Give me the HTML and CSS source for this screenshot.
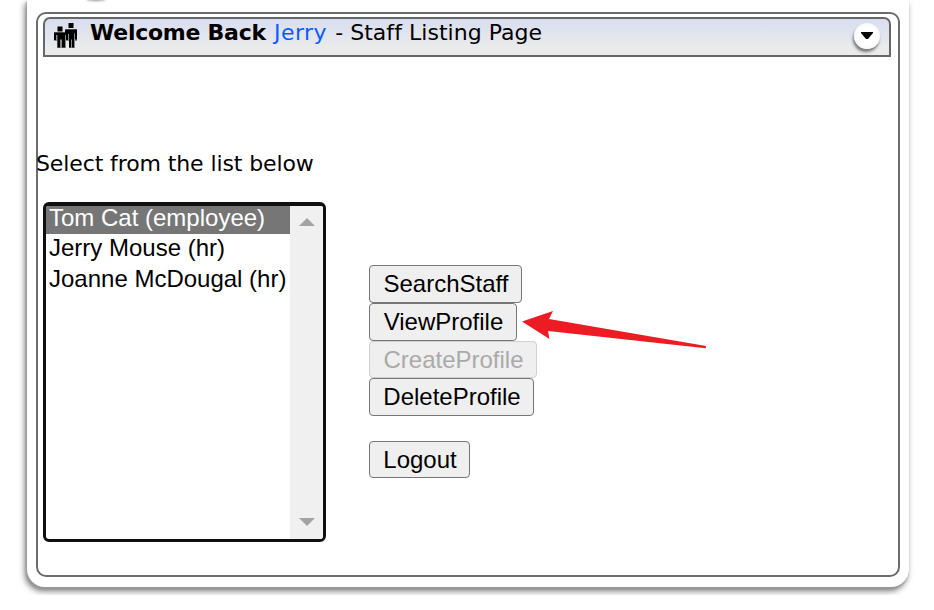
FILE: index.html
```
<!DOCTYPE html>
<html lang="en">
<head>
<meta charset="utf-8">
<title>Staff Listing Page</title>
<link rel="stylesheet" href="styles.css">
</head>
<body>
<div class="page">
  <div class="smudge"></div>
  <main class="shell">
    <section class="frame">
      <header class="bar">
        <svg class="people" width="26" height="27" viewBox="0 0 26 27">
          <path class="halo" d="M1 9h12V6h11v12h-2v7h-6v-7h-3v7H4v-7H1z"/>
          <path d="M4.500 3.500h5v5h-5zM15.500 0h5v5h-5zM1 9.500h11V6.500h12v10h-2v-6h-1v14h-2v-8h-1v8h-2V11h-1v6h-2v-5h-1v12.500H9v-8H7v8H4.500V12H3v5H1z"/>
        </svg>
        <h1 class="title"><b>Welcome Back</b> <span class="name">Jerry</span> <span class="sub">- Staff Listing Page</span></h1>
        <button class="toggle" aria-label="Menu"><svg width="12" height="8" viewBox="0 0 12 8"><path d="M0 0h12v1L7 7H5L0 1z"/></svg></button>
      </header>
      <p class="prompt"><span>Select from the list below</span></p>
      <div class="content">
        <div class="list">
          <ul class="options">
            <li class="selected"><span>Tom Cat (employee)</span></li>
            <li><span>Jerry Mouse (hr)</span></li>
            <li><span>Joanne McDougal (hr)</span></li>
          </ul>
          <div class="scroll">
            <svg width="16" height="8" viewBox="0 0 16 8"><path d="M0 8L8 0l8 8z"/></svg>
            <svg width="16" height="8" viewBox="0 0 16 8"><path d="M0 0h16L8 8z"/></svg>
          </div>
        </div>
        <div class="actions">
          <button class="search">SearchStaff</button>
          <button class="view">ViewProfile</button>
          <button class="create" disabled>CreateProfile</button>
          <button class="delete">DeleteProfile</button>
          <button class="logout">Logout</button>
        </div>
      </div>
    </section>
  </main>
  <svg class="arrow" width="184" height="30" viewBox="0 0 184 30"><path d="M0 10.500L31 0l-4 8 157 27-0.300 2.300L26 20l1.500 8z"/></svg>
</div>
</body>
</html>
```
FILE: styles.css
```
* { box-sizing: border-box; }
body { margin: 0; background: #fff; color: #000; }
.page { position: relative; height: 595px; overflow: hidden; padding: 0 25px 0 27px; }
.smudge { position: absolute; left: 86px; top: -2px; width: 20px; height: 3px; border-radius: 50%; background: #999; filter: blur(1px); }
.shell {
  height: 587px; padding: 12px 9px 10px; border-radius: 0 0 18px 18px; background: #fff;
  box-shadow: -1px 2px 2px #999, -2px 4px 6px #777;
}
.frame { height: 565px; border: 2px solid #6c6c6c; border-radius: 10px; padding: 3px 7px 0 5px; }
.bar {
  display: flex; height: 40px; border: 2px solid #666; border-radius: 7px 7px 0 0;
  background: linear-gradient(#d8def0, #ebebeb 80%);
  padding: 0 9px 0 8px;
}
.people { flex: none; margin-top: 4px; }
.halo { fill: #888; }
.title { margin: 1px 0 0 11px; font: 22px/26px "DejaVu Sans", Verdana, sans-serif; white-space: nowrap; flex: 1; }
.title b { letter-spacing: -0.250px; }
.name { margin-left: 1px; color: #0a5cff; letter-spacing: 0.500px; }
.sub { margin-left: 1px; letter-spacing: 0.040px; }
.toggle {
  display: flex; justify-content: center; width: 26px; height: 26px; padding: 9px 0 0; margin-top: 4px;
  border: 0; border-radius: 50%; background: radial-gradient(circle, #fff 50%, #ececec);
  box-shadow: -1px 3px 3px #777;
}
.prompt { margin: 92px 0 0 -7px; font: 22px/30px "DejaVu Sans", Verdana, sans-serif; letter-spacing: -0.110px; white-space: nowrap; }
.content { display: flex; margin-top: 23px; font: 24px/30px "Liberation Sans", Arial, sans-serif; }
.list { display: flex; width: 283px; height: 340px; border: 3px solid #101010; border-top-width: 4px; border-radius: 6px; overflow: hidden; }
.options { flex: 1; margin: 0; padding: 0; list-style: none; white-space: nowrap; }
.options li { height: 31px; padding-left: 3px; line-height: 29px; }
.options .selected { height: 28px; line-height: 24px; margin-bottom: -1px; background: #767676; color: #fff; }
.scroll { width: 33px; display: flex; flex-direction: column; justify-content: space-between; align-items: center; padding: 12px 0 13px; background: #f0f0f0; fill: #a3a3a3; }
.actions { display: flex; flex-direction: column; align-items: flex-start; margin: 63px 0 0 43px; }
.actions button {
  height: 38px; padding: 0 0 0 1px; border: 1px solid #767676; border-radius: 4px; background: #efefef;
  color: #000; font: inherit; line-height: 36px; text-align: center;
}
.actions .search { width: 153px; }
.actions .view { width: 148px; }
.actions .create { width: 168px; height: 37px; line-height: 34px; border-color: #d0d0d0; color: #aaa; }
.actions .delete { width: 165px; }
.actions .logout { width: 101px; height: 37px; margin-top: 25px; }
.arrow { position: absolute; left: 522px; top: 311px; overflow: visible; fill: #ed1c24; }
```
